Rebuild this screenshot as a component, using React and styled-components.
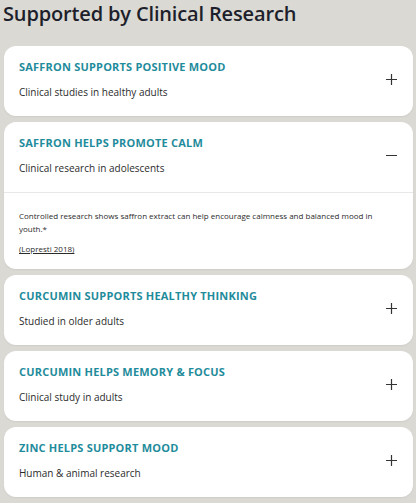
import React from "react";
import styled, { createGlobalStyle } from "styled-components";

const Global = createGlobalStyle`
  html, body { margin: 0; padding: 0; background: #dbd9d4; }
  body { font-family: "Open Sans", "Liberation Sans", sans-serif; }
`;

const Page = styled.div`
  padding: 0 3px 6px 4px;
  display: flex;
  flex-direction: column;
`;

const Heading = styled.h2`
  margin: 0 0 0 -1px;
  font-family: "Open Sans", sans-serif;
  font-weight: 600;
  font-size: 20px;
  letter-spacing: -0.15px;
  line-height: 28px;
  color: #1d1f2b;
  padding-bottom: 18px;
`;

const List = styled.div`
  display: flex;
  flex-direction: column;
  gap: 6px;
`;

const Card = styled.div`
  background: #fff;
  border-radius: 12px;
  box-shadow: 0 1px 2px rgba(0, 0, 0, 0.06);
  overflow: hidden;
`;

const Header = styled.div`
  display: flex;
  align-items: center;
  padding: 14px 16px 17px 15px;
  border-bottom: ${(p) => (p.$open ? "1px solid #e8e8e6" : "none")};
`;

const Texts = styled.div`
  flex: 1;
  display: flex;
  flex-direction: column;
  gap: 11px;
`;

const Title = styled.div`
  font-family: "Open Sans", sans-serif;
  font-weight: 700;
  font-size: 11px;
  line-height: 14px;
  letter-spacing: 0.2px;
  color: #1f8c9c;
  text-transform: uppercase;
`;

const Sub = styled.div`
  font-size: 10px;
  line-height: 14px;
  color: #2b2b2b;
`;

const Body = styled.div`
  padding: 16px 24px 14px 15px;
  font-size: 8px;
  line-height: 13px;
  color: #2b2b2b;
`;

const Cite = styled.a`
  display: inline-block;
  margin-top: 7px;
  color: #2b2b2b;
  text-decoration: underline;
`;

const Icon = ({ open }) => (
  <svg width="11" height="11" viewBox="0 0 11 11" aria-hidden="true">
    <path d="M0 5.5h11" stroke="#333" strokeWidth="1.2" />
    {!open && <path d="M5.5 0v11" stroke="#333" strokeWidth="1.2" />}
  </svg>
);

const items = [
  { t: "Saffron supports positive mood", s: "Clinical studies in healthy adults" },
  {
    t: "Saffron helps promote calm",
    s: "Clinical research in adolescents",
    open: true,
    body: "Controlled research shows saffron extract can help encourage calmness and balanced mood in youth.*",
    cite: "(Lopresti 2018)",
  },
  { t: "Curcumin supports healthy thinking", s: "Studied in older adults" },
  { t: "Curcumin helps memory & focus", s: "Clinical study in adults" },
  { t: "Zinc helps support mood", s: "Human & animal research" },
];

export default function App() {
  return (
    <>
      <Global />
      <Page>
        <Heading>Supported by Clinical Research</Heading>
        <List>
          {items.map((it) => (
            <Card key={it.t}>
              <Header $open={it.open}>
                <Texts>
                  <Title>{it.t}</Title>
                  <Sub>{it.s}</Sub>
                </Texts>
                <Icon open={it.open} />
              </Header>
              {it.open && (
                <Body>
                  <div>{it.body}</div>
                  <Cite href="#">{it.cite}</Cite>
                </Body>
              )}
            </Card>
          ))}
        </List>
      </Page>
    </>
  );
}
